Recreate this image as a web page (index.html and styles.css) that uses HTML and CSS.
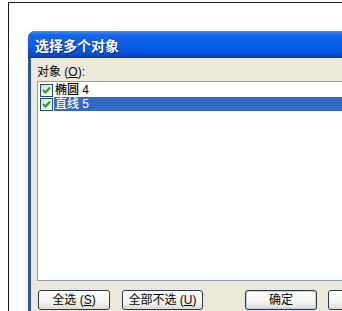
FILE: index.html
```html
<!DOCTYPE html>
<html>
<head>
<meta charset="utf-8">
<link rel="stylesheet" href="styles.css">
</head>
<body>
<div class="page">
  <div class="dialog">
    <div class="titlebar">选择多个对象</div>
    <div class="client">
      <div class="label">对象 (<u>O</u>):</div>
      <div class="list">
        <div class="row">
          <span class="cb"><svg width="9" height="9" viewBox="0 0 9 9"><path d="M1 4 L3.5 6.5 L8 1.5" fill="none" stroke="#21a121" stroke-width="2"/></svg></span>
          <span class="txt">椭圆 4</span>
        </div>
        <div class="row sel">
          <span class="cb"><svg width="9" height="9" viewBox="0 0 9 9"><path d="M1 4 L3.5 6.5 L8 1.5" fill="none" stroke="#21a121" stroke-width="2"/></svg></span>
          <span class="txt">直线 5</span>
        </div>
      </div>
      <div class="buttons">
        <div class="btn w72">全选 (<u>S</u>)</div>
        <div class="btn w81">全部不选 (<u>U</u>)</div>
        <div class="btn w72 def">确定</div>
        <div class="btn w72"></div>
      </div>
    </div>
  </div>
</div>
</body>
</html>
```
FILE: styles.css
```css
html, body {
  margin: 0;
  padding: 0;
  background: #fff;
  overflow: hidden;
  height: 311px;
}
.page {
  margin: 2px 0 0 8px;
  border-left: 1px solid #1a1a1a;
  border-top: 1px solid #1a1a1a;
  padding: 28px 0 0 19px;
  height: 280px;
  overflow: hidden;
}
.dialog {
  width: 324px;
  border-radius: 7px 7px 0 0;
  overflow: hidden;
  background: #2a55ac;
}
.titlebar {
  height: 27px;
  box-sizing: border-box;
  padding: 5px 0 0 7px;
  background: linear-gradient(#4a8cf4 0px, #1566ea 4px, #0b5ce8 14px, #0553e0 22px, #0a44b8 25px, #0a3a9a 27px);
  color: #fff;
  font-family: "Noto Sans CJK SC", sans-serif;
  font-weight: bold;
  font-size: 14px;
  line-height: 18px;
  text-shadow: 1px 1px 0 #0a2a80;
}
.client {
  margin-left: 3px;
  background: #ece9d8;
  padding: 7px 0 20px 6px;
  font-family: "Liberation Sans", "Noto Sans CJK SC", sans-serif;
  font-size: 12px;
  color: #000;
}
.label {
  line-height: 14px;
  height: 14px;
  margin-bottom: 2px;
}
.list {
  height: 200px;
  box-sizing: border-box;
  border: 1px solid #8aa0b8;
  border-right: none;
  background: #fff;
  padding-top: 1px;
}
.row {
  display: flex;
  align-items: center;
  height: 14px;
  padding-left: 2px;
}
.cb {
  width: 11px;
  height: 11px;
  border: 1px solid #1c5180;
  background: linear-gradient(135deg, #dcdcd6, #fff);
  display: flex;
  align-items: center;
  justify-content: center;
  flex: none;
  margin-right: 1px;
}
.txt {
  flex: 1;
  line-height: 14px;
  height: 14px;
  padding-left: 1px;
  font-weight: 500;
}
.row.sel .txt {
  background: #316ac5;
  color: #fff;
}
.buttons {
  display: flex;
  margin-top: 9px;
  padding-left: 1px;
}
.btn {
  height: 20px;
  box-sizing: border-box;
  border: 1px solid #2a3a4a;
  border-radius: 3px;
  background: linear-gradient(#ffffff, #f4f4f0 60%, #dcdcd4);
  text-align: center;
  line-height: 18px;
  font-size: 12px;
  margin-right: 12px;
  flex: none;
}
.btn.w72 { width: 72px; }
.btn.w81 { width: 81px; margin-right: 42px; }
.btn.def {
  box-shadow: inset 0 0 0 1px #b8d0f0;
  margin-right: 11px;
}
```
